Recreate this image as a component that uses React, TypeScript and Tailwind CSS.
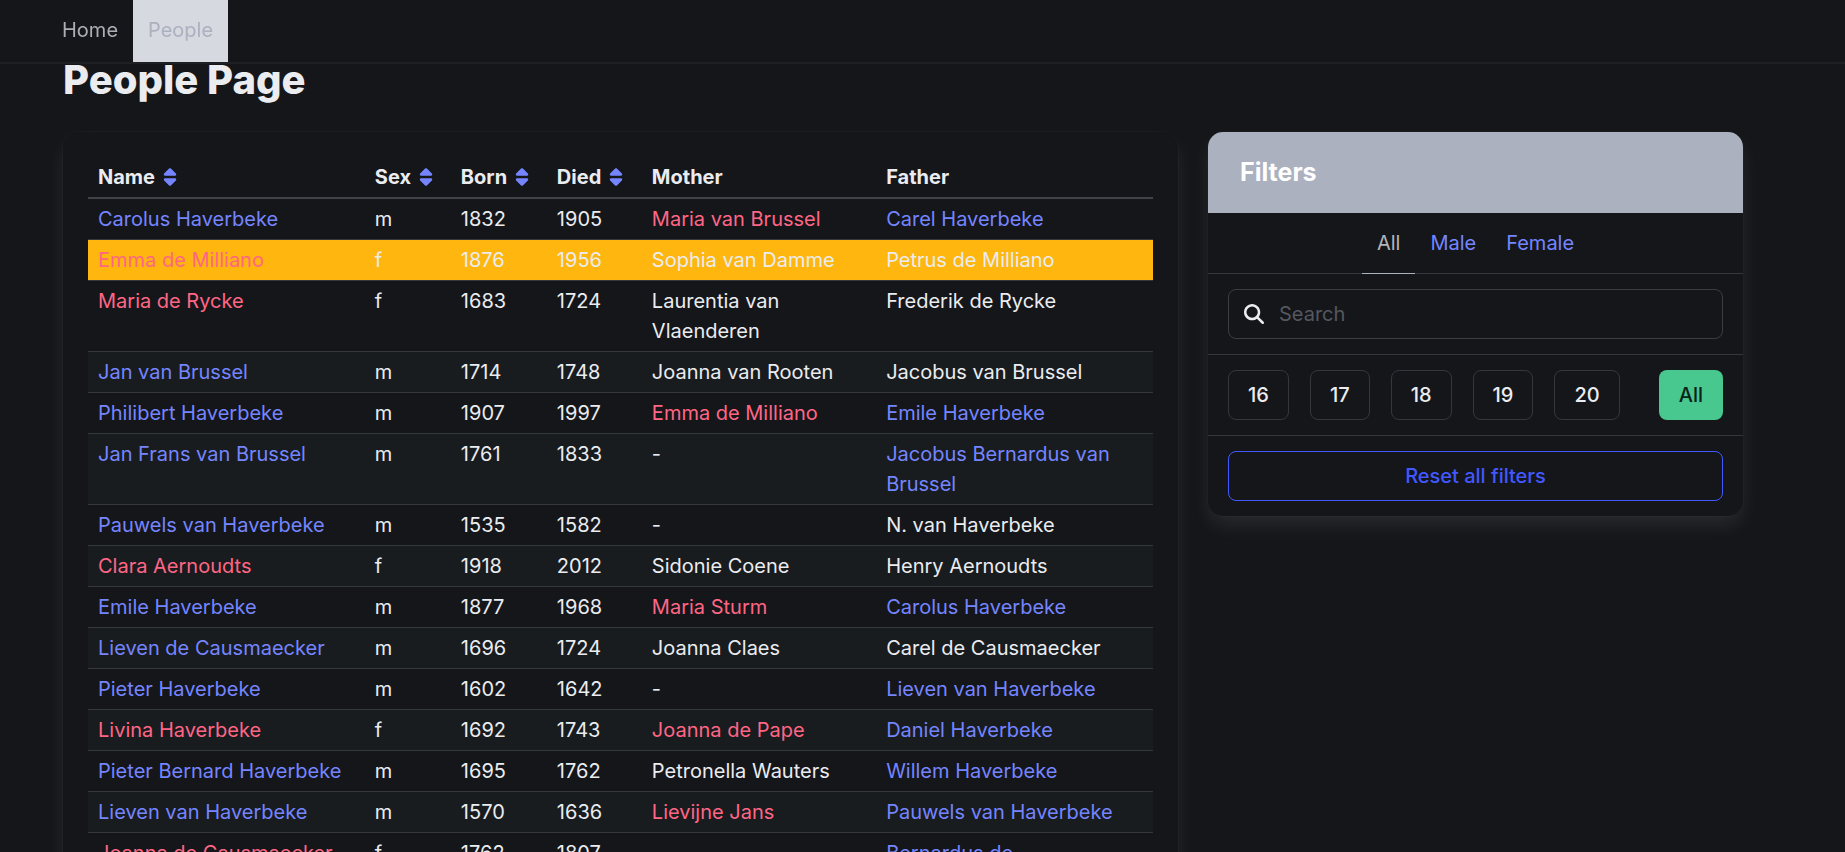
import { useState } from "react";
import { FaMagnifyingGlass, FaSort } from "react-icons/fa6";

type Kin = [string, ("m" | "f")?];
type Person = {
  name: string;
  sex: "m" | "f";
  born: number;
  died: number;
  mother: Kin;
  father: Kin;
};

const people: Person[] = [
  { name: "Carolus Haverbeke", sex: "m", born: 1832, died: 1905, mother: ["Maria van Brussel", "f"], father: ["Carel Haverbeke", "m"] },
  { name: "Emma de Milliano", sex: "f", born: 1876, died: 1956, mother: ["Sophia van Damme"], father: ["Petrus de Milliano"] },
  { name: "Maria de Rycke", sex: "f", born: 1683, died: 1724, mother: ["Laurentia van Vlaenderen"], father: ["Frederik de Rycke"] },
  { name: "Jan van Brussel", sex: "m", born: 1714, died: 1748, mother: ["Joanna van Rooten"], father: ["Jacobus van Brussel"] },
  { name: "Philibert Haverbeke", sex: "m", born: 1907, died: 1997, mother: ["Emma de Milliano", "f"], father: ["Emile Haverbeke", "m"] },
  { name: "Jan Frans van Brussel", sex: "m", born: 1761, died: 1833, mother: ["-"], father: ["Jacobus Bernardus van Brussel", "m"] },
  { name: "Pauwels van Haverbeke", sex: "m", born: 1535, died: 1582, mother: ["-"], father: ["N. van Haverbeke"] },
  { name: "Clara Aernoudts", sex: "f", born: 1918, died: 2012, mother: ["Sidonie Coene"], father: ["Henry Aernoudts"] },
  { name: "Emile Haverbeke", sex: "m", born: 1877, died: 1968, mother: ["Maria Sturm", "f"], father: ["Carolus Haverbeke", "m"] },
  { name: "Lieven de Causmaecker", sex: "m", born: 1696, died: 1724, mother: ["Joanna Claes"], father: ["Carel de Causmaecker"] },
  { name: "Pieter Haverbeke", sex: "m", born: 1602, died: 1642, mother: ["-"], father: ["Lieven van Haverbeke", "m"] },
  { name: "Livina Haverbeke", sex: "f", born: 1692, died: 1743, mother: ["Joanna de Pape", "f"], father: ["Daniel Haverbeke", "m"] },
  { name: "Pieter Bernard Haverbeke", sex: "m", born: 1695, died: 1762, mother: ["Petronella Wauters"], father: ["Willem Haverbeke", "m"] },
  { name: "Lieven van Haverbeke", sex: "m", born: 1570, died: 1636, mother: ["Lievijne Jans", "f"], father: ["Pauwels van Haverbeke", "m"] },
  { name: "Joanna de Causmaecker", sex: "f", born: 1762, died: 1807, mother: ["-"], father: ["Bernardus de Causmaecker", "m"] },
];

const columns = [
  { label: "Name", sortable: true, width: "w-[26%]" },
  { label: "Sex", sortable: true, width: "w-[86px]" },
  { label: "Born", sortable: true, width: "w-[96px]" },
  { label: "Died", sortable: true, width: "w-[95px]" },
  { label: "Mother", sortable: false, width: "w-[22%]" },
  { label: "Father", sortable: false, width: "w-[26%]" },
];

function PersonLink({ name, sex }: { name: string; sex?: "m" | "f" }) {
  if (!sex) return <>{name}</>;
  return (
    <a href={"#" + name.toLowerCase().replaceAll(" ", "-")} className={sex === "f" ? "text-[#ff6685]" : "text-[#7585ff]"}>
      {name}
    </a>
  );
}

function PeopleTable({ selected }: { selected: string }) {
  return (
    <table className="w-full table-fixed border-collapse text-left">
      <colgroup>
        {columns.map((c) => (
          <col key={c.label} className={c.width} />
        ))}
      </colgroup>
      <thead>
        <tr className="border-b-2 border-[#404248]">
          {columns.map((c) => (
            <th key={c.label} scope="col" className="px-2.5 py-[5px] font-bold text-[#ebecf0]">
              <span className="flex items-center whitespace-nowrap">
                {c.label}
                {c.sortable && (
                  <a href={"#sort-" + c.label.toLowerCase()} aria-label={"Sort by " + c.label} className="flex w-[30px] justify-center text-[#7585ff]">
                    <FaSort size={20} />
                  </a>
                )}
              </span>
            </th>
          ))}
        </tr>
      </thead>
      <tbody>
        {people.map((p) => (
          <tr
            key={p.name}
            className={
              p.name === selected
                ? "border-b border-[#34373c] bg-[#ffb70f] align-top"
                : "border-b border-[#34373c] align-top even:bg-[#181c1f]"
            }
          >
            <td className="px-2.5 py-[5px]"><PersonLink name={p.name} sex={p.sex} /></td>
            <td className="px-2.5 py-[5px]">{p.sex}</td>
            <td className="px-2.5 py-[5px]">{p.born}</td>
            <td className="px-2.5 py-[5px]">{p.died}</td>
            <td className="px-2.5 py-[5px]"><PersonLink name={p.mother[0]} sex={p.mother[1]} /></td>
            <td className="px-2.5 py-[5px]"><PersonLink name={p.father[0]} sex={p.father[1]} /></td>
          </tr>
        ))}
      </tbody>
    </table>
  );
}

const card = "rounded-[15px] bg-[#14161a] shadow-[0_10px_20px_-2px_rgba(235,236,240,0.1),0_0_0_1px_rgba(235,236,240,0.02)]";

function Filters() {
  const [query, setQuery] = useState("");
  return (
    <nav aria-label="Filters" className={card}>
      <p className="rounded-t-[15px] bg-[#abb1bf] px-8 py-[25px] text-[25px] leading-[31px] font-bold text-white">Filters</p>
      <div className="flex justify-center border-b border-[#34373c]">
        <a href="#all" className="-mb-px border-b border-[#abb1bf] px-[15px] py-[15px] text-[#b2b4ba]">All</a>
        <a href="#male" className="px-[15px] py-[15px] text-[#7585ff]">Male</a>
        <a href="#female" className="px-[15px] py-[15px] text-[#7585ff]">Female</a>
      </div>
      <div className="border-b border-[#34373c] px-5 py-[15px]">
        <label className="flex h-[50px] items-center rounded-[8px] border border-[#3a3d42]">
          <span className="flex w-[50px] justify-center text-[#ebecf0]">
            <FaMagnifyingGlass size={20} />
          </span>
          <input
            type="search"
            aria-label="Search"
            placeholder="Search"
            value={query}
            onChange={(e) => setQuery(e.target.value)}
            className="min-w-0 flex-1 bg-transparent outline-none placeholder:text-[#55585e]"
          />
        </label>
      </div>
      <div className="flex items-center justify-between border-b border-[#34373c] px-5 py-[15px]">
        <div className="flex gap-[21px] font-medium text-[#ebecf0]">
          {["16", "17", "18", "19", "20"].map((century) => (
            <button key={century} type="button" className="h-[50px] rounded-[8px] border border-[#34373c] px-[19px]">
              {century}
            </button>
          ))}
        </div>
        <button type="button" className="h-[50px] rounded-[8px] bg-[#48c78e] px-5 font-medium text-[#0a2318]">All</button>
      </div>
      <div className="px-5 py-[15px]">
        <button type="button" className="h-[50px] w-full rounded-[8px] border border-[#4258ff] font-medium text-[#4258ff]">
          Reset all filters
        </button>
      </div>
    </nav>
  );
}

export default function App() {
  return (
    <div className="h-screen overflow-hidden bg-[#14161a] font-['Inter',sans-serif] text-[20px] leading-[30px] text-[#ebecf0]">
      <nav aria-label="Main" className="fixed inset-x-0 top-0 z-10 flex bg-[#14161a] pl-[47px] shadow-[0_2px_0_0_#1f2024]">
        <a href="#home" className="px-[15px] pt-[15px] pb-[17px] text-[#abaeb5]">Home</a>
        <a href="#people" className="bg-[#d6d9e0] px-[15px] pt-[15px] pb-[17px] text-[#abb1bf]">People</a>
      </nav>
      <main className="pt-[57px] pr-[102px] pl-[63px]">
        <h1 className="mb-[30px] text-[40px] leading-[45px] font-extrabold">People Page</h1>
        <div className="grid grid-cols-[minmax(0,1115fr)_minmax(0,535fr)] items-start gap-[30px]">
          <div className={card + " p-[25px]"}>
            <PeopleTable selected="Emma de Milliano" />
          </div>
          <Filters />
        </div>
      </main>
    </div>
  );
}
